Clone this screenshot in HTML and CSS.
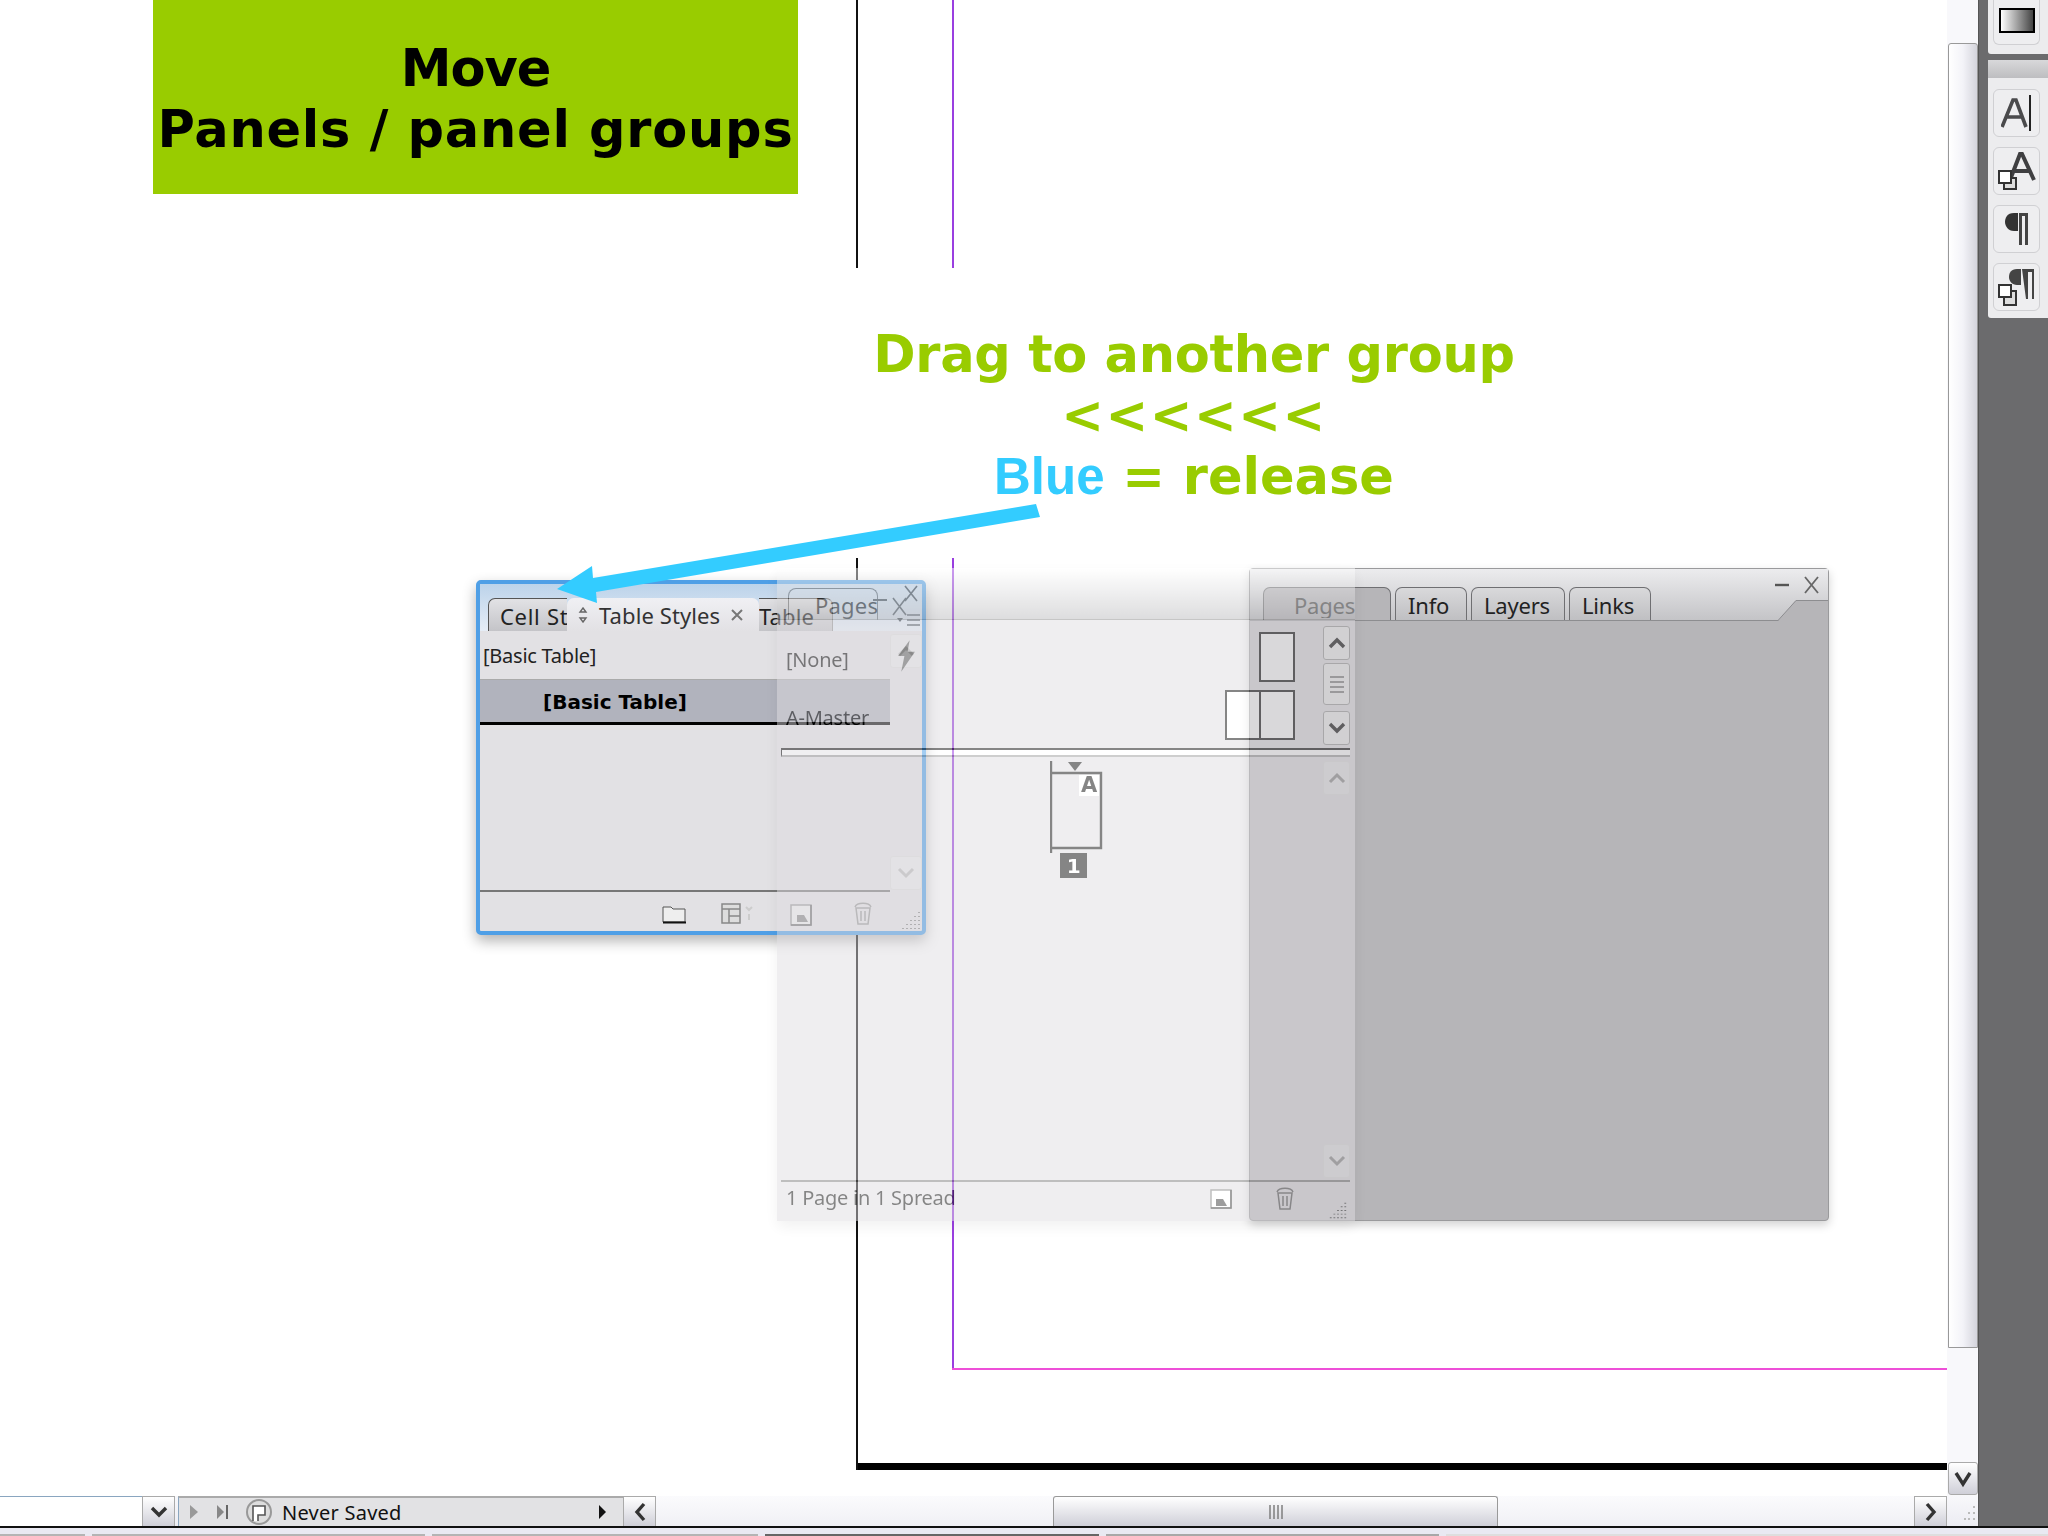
FILE: index.html
```html
<!DOCTYPE html>
<html lang="en">
<head>
<meta charset="utf-8">
<title>Move panels</title>
<link rel="stylesheet" href="styles.css">
</head>
<body>
<div class="app">
  <div class="workspace">
    <div class="document">
      <div class="doc-row">
        <main class="canvas">
          <h1 class="title"><span class="ln-move">Move</span><br><span class="ln-panels">Panels / panel groups</span></h1>
          <p class="callout"><span class="ln-drag">Drag to another group</span><br><span class="ln-arrows">&lt;&lt;&lt;&lt;&lt;&lt;</span><br><span class="blue">Blue</span> = release</p>

          <i class="guide black-a"></i><i class="guide black-b"></i><i class="guide purple-a"></i><i class="guide purple-b"></i><i class="guide pink"></i><i class="guide black-h"></i>

          <section class="panel-grey">
            <div class="grey-head">
              <div class="grey-tab active"><span>Pages</span></div>
              <div class="grey-tab info">Info</div>
              <div class="grey-tab layers">Layers</div>
              <div class="grey-tab links">Links</div>
              <div class="win-btns"><svg width="50" height="22" viewBox="0 0 50 22"><path d="M2 11h14" stroke="#555" stroke-width="2.400"/><path d="M32 3l13 16M45 3L32 19" stroke="#666" stroke-width="1.800" fill="none"/></svg></div>
            </div>
            <svg class="notch" width="50" height="21" viewBox="0 0 50 21"><path d="M0 21L18 0h32v21z" fill="#b6b5b8"/><path d="M0 20.500L18 .5h32" stroke="#8d8d90" fill="none"/></svg>
          </section>

          <section class="panel-blue">
            <div class="blue-head">
              <div class="tab side first"><span>Cell Styles</span></div>
              <div class="tab current">
                <svg width="14" height="16" viewBox="0 0 14 16"><path d="M7 1l3 4H4zM7 15l3-4H4z" fill="none" stroke="#666" stroke-width="1.400"/></svg>
                <span>Table Styles</span>
                <svg class="tab-x" width="14" height="14" viewBox="0 0 14 14"><path d="M2 2l10 10M12 2L2 12" stroke="#777" stroke-width="2"/></svg>
              </div>
              <div class="tab side last"><span>Table</span></div>
            </div>
            <div class="blue-body">
              <div class="blue-list">
                <div class="style-row">[Basic Table]</div>
                <div class="style-row selected">[Basic Table]</div>
                <div class="style-fill"></div>
              </div>
              <div class="blue-scroll">
                <div class="sb-btn"><svg width="20" height="14" viewBox="0 0 20 14"><path d="M3 11l7-7 7 7" fill="none" stroke="#bbb" stroke-width="3"/></svg></div>
                <div class="sb-btn"><svg width="20" height="14" viewBox="0 0 20 14"><path d="M3 3l7 7 7-7" fill="none" stroke="#bbb" stroke-width="3"/></svg></div>
              </div>
            </div>
            <div class="blue-foot">
              <svg class="ic-folder" width="24" height="20" viewBox="0 0 24 20"><path d="M1 18V3h8l2 2h12v13z" fill="#eee" stroke="#555"/><path d="M1 18.500h23" stroke="#111" stroke-width="2"/></svg>
              <svg class="ic-table" width="36" height="22" viewBox="0 0 36 22"><path d="M1 2h18v19H1zM1 7h18M8 7v14M8 14h11" fill="#ddd" stroke="#888" stroke-width="1.500"/><path d="M25 5l3 3 3-3M28 12v6" stroke="#ccc" stroke-width="2" fill="none"/></svg>
              <svg class="ic-new" width="22" height="22" viewBox="0 0 22 22"><path d="M1 1h20v20H1z" fill="#eee" stroke="#999" stroke-width="1.500"/><path d="M21 1v20H1" fill="none" stroke="#666" stroke-width="1.500"/><path d="M7 11h7l4 7H7z" fill="#888"/></svg>
              <svg class="ic-trash" width="20" height="24" viewBox="0 0 20 24"><path d="M3 7h14l-2 16H5zM2 6c2-5 14-5 16 0M8 10v10M12 10v10" fill="none" stroke="#999" stroke-width="1.500"/></svg>
              <svg class="grip" width="22" height="22" viewBox="0 0 22 22"><path d="M19 3v1M15 7v1M19 7v1M11 11v1M15 11v1M19 11v1M7 15v1M11 15v1M15 15v1M19 15v1M3 19v1M7 19v1M11 19v1M15 19v1M19 19v1" stroke="#888" stroke-width="2"/></svg>
            </div>
          </section>

          <section class="ghost">
            <div class="ghost-head">
              <div class="ghost-tab">
                <svg width="12" height="16" viewBox="0 0 12 16"><path d="M6 1l3 4H3zM6 15l3-4H3z" fill="none" stroke="#555" stroke-width="1.400"/></svg>
                <span>Pages</span>
              </div>
              <svg class="ghost-btns" width="52" height="48" viewBox="0 0 52 48"><path d="M2 22h14" stroke="#333" stroke-width="2"/><path d="M22 20l13 17M35 20L22 37M34 8l12 15M46 8L34 23" stroke="#333" stroke-width="1.600" fill="none"/><path d="M26 40h6l-3 4z" fill="#222"/><path d="M36 37h13M36 42h13M36 47h13" stroke="#333" stroke-width="1.500"/></svg>
            </div>
            <div class="ghost-opts">
              <span>[None]</span>
              <svg class="bolt" width="21" height="34" viewBox="0 0 20 32"><path d="M13 1L2 16h6L5 31l13-19h-7z" fill="#555"/></svg>
            </div>
            <div class="ghost-masters">
              <div class="master-name">A-Master</div>
              <div class="master-thumbs">
                <div class="thumb"></div>
                <div class="thumb-pair"><div class="thumb half"></div><div class="thumb half joined"></div></div>
              </div>
              <div class="master-scroll">
                <div class="sb-small"><svg width="20" height="14" viewBox="0 0 20 14"><path d="M3 11l7-7 7 7" fill="none" stroke="#000" stroke-width="3.400"/></svg></div>
                <div class="sb-small thumb-grip"><svg width="18" height="18" viewBox="0 0 18 18"><path d="M2 2h14M2 7h14M2 12h14M2 17h14" stroke="#555" stroke-width="1.500"/></svg></div>
                <div class="sb-small last-btn"><svg width="20" height="14" viewBox="0 0 20 14"><path d="M3 3l7 7 7-7" fill="none" stroke="#000" stroke-width="3.400"/></svg></div>
              </div>
            </div>
            <div class="ghost-divider"></div>
            <div class="ghost-pages">
              <div class="spread">
                <svg width="56" height="118" viewBox="0 0 56 118">
                  <path d="M1 0v92" stroke="#000" stroke-width="2.400"/>
                  <path d="M18 1h14l-7 9z" fill="#000"/>
                  <path d="M1 12h50v75H1z" fill="#dddce0" stroke="#000" stroke-width="2.400"/>
                  <path d="M29 14h20v21H29z" fill="#fff"/>
                  <text x="39" y="31" class="thumb-letter">A</text>
                  <path d="M10 92h27v25H10z" fill="#000"/>
                  <text x="23.500" y="112" class="thumb-num">1</text>
                </svg>
              </div>
              <div class="pages-scroll">
                <div class="sb-small faint"><svg width="20" height="14" viewBox="0 0 20 14"><path d="M3 11l7-7 7 7" fill="none" stroke="#888" stroke-width="3"/></svg></div>
                <div class="sb-small faint"><svg width="20" height="14" viewBox="0 0 20 14"><path d="M3 3l7 7 7-7" fill="none" stroke="#888" stroke-width="3"/></svg></div>
              </div>
            </div>
            <div class="ghost-foot">
              <span class="spread-count">1 Page in 1 Spread</span>
              <svg class="foot-new" width="22" height="20" viewBox="0 0 22 20"><path d="M1 1h20v18H1z" fill="#fff" stroke="#777" stroke-width="1.500"/><path d="M21 1v18H1" fill="none" stroke="#222" stroke-width="1.500"/><path d="M6 10h7l4 7H6z" fill="#333"/></svg>
              <svg class="foot-trash" width="20" height="24" viewBox="0 0 20 24"><path d="M3 7h14l-2 16H5zM2 6c2-5 14-5 16 0M8 10v10M12 10v10" fill="none" stroke="#555" stroke-width="1.500"/></svg>
              <svg class="foot-grip" width="20" height="20" viewBox="0 0 22 22"><path d="M19 3v1M15 7v1M19 7v1M11 11v1M15 11v1M19 11v1M7 15v1M11 15v1M15 15v1M19 15v1M3 19v1M7 19v1M11 19v1M15 19v1M19 19v1" stroke="#333" stroke-width="2"/></svg>
            </div>
          </section>

          <svg class="arrow" width="490" height="110" viewBox="556 500 490 110"><path d="M1036 504L593 578 592 566 557 589 597 603 596 592 1040 517z" fill="#33ccff"/></svg>
        </main>
        <div class="vscroll">
          <div class="vs-top"></div>
          <div class="vs-thumb"></div>
          <div class="vs-track"></div>
          <div class="vs-down"><svg width="20" height="18" viewBox="0 0 20 18"><path d="M3 3l7 11 7-11" fill="none" stroke="#333" stroke-width="3.400"/></svg></div>
        </div>
      </div>
      <div class="statusbar">
        <div class="page-field"></div>
        <div class="st-btn"><svg width="20" height="14" viewBox="0 0 20 14"><path d="M3 3l7 7 7-7" fill="none" stroke="#333" stroke-width="3.400"/></svg></div>
        <div class="st-info">
          <svg class="st-play" width="10" height="16" viewBox="0 0 10 16"><path d="M1 1l8 7-8 7z" fill="#999"/></svg>
          <svg class="st-last" width="14" height="16" viewBox="0 0 14 16"><path d="M1 1l7 7-7 7z" fill="#888"/><path d="M11 1v14" stroke="#666" stroke-width="2"/></svg>
          <svg class="st-doc" width="26" height="28" viewBox="0 0 26 28"><circle cx="13" cy="14" r="12" fill="#ddd" stroke="#999" stroke-width="2"/><path d="M7 23V8h12v9h-7v6" fill="#fff" stroke="#555" stroke-width="1.600"/></svg>
          <span class="st-text">Never Saved</span>
          <svg class="st-more" width="9" height="16" viewBox="0 0 9 16"><path d="M1 1l7 7-7 7z" fill="#111"/></svg>
        </div>
        <div class="st-btn left"><svg width="14" height="20" viewBox="0 0 14 20"><path d="M11 2L4 10l7 8" fill="none" stroke="#333" stroke-width="3.400"/></svg></div>
        <div class="hscroll">
          <div class="hs-thumb"><svg width="16" height="14" viewBox="0 0 16 14"><path d="M2 0v14M6 0v14M10 0v14M14 0v14" stroke="#777" stroke-width="1.400"/></svg></div>
        </div>
        <div class="st-btn right"><svg width="14" height="20" viewBox="0 0 14 20"><path d="M3 2l7 8-7 8" fill="none" stroke="#333" stroke-width="3.400"/></svg></div>
        <div class="corner"><svg width="14" height="22" viewBox="0 0 14 22"><path d="M10 2v2M10 8v2M5 8v2M10 14v2M5 14v2M1 14v2" stroke="#bbb" stroke-width="2"/></svg></div>
      </div>
    </div>
    <aside class="gutter">
      <div class="tool-top">
        <div class="tool-btn gradient-btn"><div class="swatch"></div></div>
      </div>
      <div class="tool-panel">
        <div class="tool-head"></div>
        <div class="tool-list">
          <div class="tool-btn"><svg width="32" height="36" viewBox="0 0 32 36"><path d="M1 32L12 5h3l10 27M6 22h15" fill="none" stroke="#4a4a4c" stroke-width="3.600"/><path d="M29 0v36" stroke="#222" stroke-width="2"/></svg></div>
          <div class="tool-btn"><svg width="38" height="38" viewBox="0 0 38 38"><path d="M12 28L22 2h2l12 26M16 19h15" fill="none" stroke="#3f3f41" stroke-width="4"/><path d="M6 26h12v11H6z" fill="#ddd" stroke="#333" stroke-width="2"/><path d="M1 19h12v12H1z" fill="#fff" stroke="#333" stroke-width="2"/></svg></div>
          <div class="tool-btn"><svg width="26" height="34" viewBox="0 0 26 34"><path d="M14 1H10C3 1 1 6 1 10s3 9 9 9h4z" fill="#333"/><path d="M15 1h9v32h-3V4h-3v29h-3z" fill="#444"/></svg></div>
          <div class="tool-btn"><svg width="38" height="40" viewBox="0 0 38 40"><path d="M23 2h-4c-6 0-8 4-8 8s3 8 8 8h4z" fill="#444"/><path d="M24 2h12v30h-2V5h-4v27h-2z" fill="#444"/><path d="M6 24h12v14H6z" fill="#ddd" stroke="#333" stroke-width="2"/><path d="M1 18h12v12H1z" fill="#fff" stroke="#333" stroke-width="2"/></svg></div>
        </div>
      </div>
    </aside>
  </div>
  <div class="strip">
    <i class="st-tab a"></i><i class="st-tab b"></i><i class="st-tab c"></i><i class="st-tab d"></i><i class="st-tab e"></i><i class="st-tab f"></i>
  </div>
</div>
</body>
</html>
```
FILE: styles.css
```css
* { box-sizing: border-box; }
html, body { margin: 0; padding: 0; background: #fff; }
body { font-family: "Noto Sans", "DejaVu Sans", sans-serif; overflow: hidden; }
.app { width: 2048px; height: 1536px; display: flex; flex-direction: column; }
.workspace { flex: 1; display: flex; min-height: 0; }
.document { flex: 1; display: flex; flex-direction: column; min-width: 0; }
.doc-row { flex: 1; display: flex; min-height: 0; }

/* canvas */
.canvas { position: relative; flex: 1; overflow: hidden; background: #fff; }
.title {
  width: 645px; height: 194px; margin: 0 0 0 153px; padding-top: 38px;
  background: #99cc00; color: #000; text-align: center; white-space: nowrap;
  font: bold 51px/61px "DejaVu Sans", sans-serif;
}
.ln-move { letter-spacing: -1px; }
.ln-panels { letter-spacing: .75px; }
.callout {
  width: 700px; margin: 130px 0 0 844px; color: #99cc00; text-align: center; white-space: nowrap;
  font: bold 51px/61px "DejaVu Sans", sans-serif;
}
.ln-drag { letter-spacing: -.25px; }
.ln-arrows { letter-spacing: 1.5px; }
.blue { color: #33ccff; font-family: "Liberation Sans", sans-serif; }
.guide { position: absolute; display: block; }
.black-a { left: 856px; top: 0; width: 2px; height: 268px; background: #111; }
.black-b { left: 856px; top: 558px; width: 2px; height: 912px; background: #111; }
.purple-a { left: 952px; top: 0; width: 2px; height: 268px; background: #9a3fe0; }
.purple-b { left: 952px; top: 558px; width: 2px; height: 812px; background: #9a3fe0; }
.pink { left: 952px; top: 1368px; right: 0; height: 2px; background: #ee4fd8; }
.black-h { left: 858px; top: 1463px; right: 0; height: 7px; background: #000; }

/* grey docked panel */
.panel-grey {
  position: absolute; left: 1249px; top: 568px; width: 580px; height: 653px;
  background: #b6b5b8; border-radius: 4px; border: 1px solid #9a9a9c;
  box-shadow: 0 4px 10px rgba(0,0,0,.18);
  font-size: 22px; letter-spacing: -.2px; color: #222;
}
.grey-head {
  position: relative; height: 52px; padding: 18px 0 0 13px; display: flex; align-items: stretch; gap: 4px;
  background: linear-gradient(#ececee, #c4c4c7); border-bottom: 1px solid #8d8d90;
}
.grey-tab {
  height: 33px; padding: 4px 0 0 12px; line-height: 26px; border: 1px solid #6f6f72; border-bottom: 0;
  border-radius: 7px 7px 0 0; background: linear-gradient(#d9d9db, #bfbfc2);
}
.grey-tab.active { width: 128px; padding-left: 30px; background: #b6b5b8; }
.grey-tab.info { width: 72px; }
.grey-tab.layers { width: 94px; }
.grey-tab.links { width: 82px; }
.grey-tab.active span { display: block; width: 62px; overflow: hidden; color: #444; }
.win-btns { position: absolute; right: 5px; top: 3px; }
.notch { position: absolute; right: 0; top: 31px; }

/* blue target panel */
.panel-blue {
  position: absolute; left: 476px; top: 580px; width: 450px; height: 355px;
  display: flex; flex-direction: column; background: #e2e1e4;
  border: 4px solid #4f9fe6; border-radius: 5px;
  box-shadow: 0 6px 14px rgba(0,0,0,.3);
  font-size: 20px; letter-spacing: -.25px; color: #222;
}
.blue-head {
  height: 47px; padding: 14px 0 0 8px; display: flex; flex: none;
  background: linear-gradient(#bcd3ea, #e6edf6);
}
.tab { height: 33px; white-space: nowrap; overflow: hidden; line-height: 34px; font-size: 22px; letter-spacing: .1px; }
.tab.side { background: linear-gradient(#e2e2e5, #c4c4c8); border-top: 1px solid #555; }
.tab.first { width: 79px; padding-left: 11px; border-left: 1px solid #555; border-radius: 7px 0 0 0; letter-spacing: .7px; }
.tab.last { width: 74px; border-right: 1px solid #999; border-radius: 0 7px 0 0; }
.tab.current {
  width: 192px; padding-left: 9px; display: flex; align-items: center; gap: 9px; flex: none;
  background: linear-gradient(#f0f0f4, #e2e1e4); border-radius: 7px 7px 0 0; color: #333;
}
.tab-x { margin-left: 1px; }
.blue-body { flex: 1; display: flex; min-height: 0; }
.blue-list { flex: 1; display: flex; flex-direction: column; border-bottom: 2px solid #777; }
.style-row { height: 49px; padding: 11px 0 0 3px; line-height: 28px; border-bottom: 1px solid #aaa; }
.style-row.selected {
  height: 45px; padding: 8px 0 0 63px; background: #b1b3bd; border-bottom: 3px solid #000;
  font: bold 20px/28px "DejaVu Sans", sans-serif; letter-spacing: 0; color: #000;
}
.style-fill { flex: 1; }
.blue-scroll { width: 32px; display: flex; flex-direction: column; justify-content: space-between; padding: 3px 0 2px; }
.sb-btn { height: 34px; display: flex; align-items: center; justify-content: center; border: 1px solid #ddd; border-radius: 3px; background: #e8e8ea; }
.blue-foot { position: relative; height: 39px; flex: none; }
.blue-foot svg { position: absolute; }
.ic-folder { left: 182px; top: 12px; }
.ic-table { left: 241px; top: 10px; }
.ic-new { left: 310px; top: 12px; }
.ic-trash { left: 373px; top: 9px; }
.grip { right: 0; bottom: 0; }

/* translucent dragged panel */
.ghost {
  position: absolute; left: 777px; top: 568px; width: 578px; height: 653px;
  display: flex; flex-direction: column; opacity: .48; background: #dddce0;
  font-size: 20px; letter-spacing: -.25px; color: #000;
  box-shadow: 0 6px 14px rgba(0,0,0,.12);
}
.ghost-head {
  position: relative; flex: none; height: 52px; padding: 20px 0 0 11px;
  background: linear-gradient(#fff, #b8b8bb); border-bottom: 1px solid #888;
}
.ghost-tab {
  width: 90px; height: 32px; padding-left: 15px; display: flex; align-items: center; gap: 11px;
  border: 1px solid #555; border-bottom: 0; border-radius: 8px 8px 0 0; white-space: nowrap; overflow: visible;
}
.ghost-tab span { color: #000; font-size: 22px; letter-spacing: .2px; }
.ghost-btns { position: absolute; left: 94px; top: 10px; }
.ghost-opts { flex: none; height: 60px; display: flex; align-items: center; justify-content: flex-start; padding: 18px 0 0 9px; position: relative; }
.bolt { position: absolute; left: 119px; top: 19px; }
.ghost-masters { flex: none; height: 68px; display: flex; position: relative; padding-left: 9px; }
.master-name { padding-top: 24px; line-height: 28px; color: #000; }
.master-thumbs { position: absolute; left: 448px; top: -48px; display: flex; flex-direction: column; gap: 8px; align-items: flex-end; width: 70px; }
.thumb { width: 36px; height: 50px; background: #fff; border: 2px solid #000; }
.thumb-pair { display: flex; }
.thumb.half { width: 36px; }
.thumb.joined { margin-left: -2px; }
.master-scroll { position: absolute; left: 546px; top: -54px; width: 27px; display: flex; flex-direction: column; gap: 3px; }
.sb-small { height: 34px; display: flex; align-items: center; justify-content: center; border: 1px solid #999; border-radius: 3px; background: #eee; }
.sb-small svg { display: block; }
.thumb-grip { height: 42px; }
.last-btn { margin-top: 3px; }
.ghost-divider { flex: none; height: 9px; margin: 0 5px 0 4px; border-top: 2px solid #000; border-left: 1px solid #000; border-bottom: 2px solid #999; background: #fff; }
.ghost-pages { flex: 1; display: flex; justify-content: space-between; padding: 4px 5px 0 0; min-height: 0; }
.spread { margin-left: 273px; }
.pages-scroll { width: 27px; display: flex; flex-direction: column; justify-content: space-between; padding-bottom: 2px; }
.sb-small.faint { border-color: #ddd; background: #e6e6e8; }
.ghost-foot { flex: none; height: 41px; position: relative; margin: 0 5px 0 4px; border-top: 2px solid #777; }
.spread-count { position: absolute; left: 5px; top: 1px; line-height: 30px; white-space: nowrap; }
.foot-new { position: absolute; left: 429px; top: 7px; }
.foot-trash { position: absolute; left: 494px; top: 4px; }
.foot-grip { position: absolute; right: 2px; bottom: 1px; }
.thumb-letter { font: bold 21px "DejaVu Sans", sans-serif; text-anchor: middle; fill: #000; }
.thumb-num { font: bold 20px "DejaVu Sans", sans-serif; text-anchor: middle; fill: #fff; }
.arrow { position: absolute; left: 556px; top: 500px; }

/* vertical scrollbar */
.vscroll { width: 31px; flex: none; display: flex; flex-direction: column; background: #f8f8fb; }
.vs-top { height: 43px; flex: none; }
.vs-thumb { height: 1305px; flex: none; margin-left: 1px; border: 1px solid #999; border-radius: 3px 3px 0 0; background: linear-gradient(90deg, #fff, #f3f3f8 50%, #d4d4dc); }
.vs-track { flex: 1; }
.vs-down { height: 33px; flex: none; margin: 0 0 1px 1px; display: flex; align-items: center; justify-content: center; border: 1px solid #aaa; border-radius: 3px; background: linear-gradient(#fff, #cfcfd8); }

/* status bar */
.statusbar { height: 30px; flex: none; display: flex; background: linear-gradient(#f8f8fb, #ececf2); }
.page-field { width: 142px; flex: none; background: #fff; border-top: 1px solid #8aa6c0; }
.st-btn { width: 33px; flex: none; display: flex; align-items: center; justify-content: center; background: linear-gradient(#fff, #cfcfd8); border: 1px solid #aaa; border-bottom: 0; }
.st-info { width: 445px; flex: none; margin-left: 3px; display: flex; align-items: center; background: #e2e2e4; border-top: 2px solid #aaa; border-left: 1px solid #8aa6c0; font-size: 20px; letter-spacing: .25px; color: #111; }
.st-play { margin-left: 10px; }
.st-last { margin-left: 17px; }
.st-doc { margin-left: 16px; }
.st-text { margin-left: 10px; white-space: nowrap; flex: 1; }
.st-more { margin-right: 16px; }
.hscroll { flex: 1; padding-left: 397px; background: linear-gradient(#fbfbfd, #f0f0f5); }
.hs-thumb { width: 445px; height: 30px; display: flex; align-items: center; justify-content: center; border: 1px solid #999; border-bottom: 0; border-radius: 3px 3px 0 0; background: linear-gradient(#fff, #cfcfd8); }
.corner { width: 31px; flex: none; display: flex; align-items: flex-end; justify-content: flex-end; }

/* tool column */
.gutter { width: 70px; flex: none; padding-left: 9px; background: #6b6b6d; border-left: 1px solid #555; }
.tool-top { height: 54px; padding: 0 0 0 5px; background: #ececee; border-radius: 0 0 0 3px; }
.tool-btn { width: 47px; height: 48px; display: flex; align-items: center; justify-content: center; border: 1px solid #d0d0d3; border-radius: 6px; background: #eeeef0; }
.gradient-btn { height: 45px; border-radius: 0 0 6px 6px; border-top: 0; }
.swatch { width: 36px; height: 25px; border: 2px solid #000; margin-bottom: 4px; background: linear-gradient(90deg, #fff, #444); }
.tool-panel { margin-top: 6px; height: 258px; background: #ececee; border-radius: 3px 0 0 3px; }
.tool-head { height: 18px; background: linear-gradient(#d8d8da, #bdbdc0); }
.tool-list { display: flex; flex-direction: column; gap: 10px; padding: 11px 0 0 5px; }

/* bottom strip */
.strip { height: 10px; flex: none; display: flex; align-items: flex-end; gap: 7px; border-top: 2px solid #111; background: #e9e9f2; }
.st-tab { display: block; height: 2px; }
.st-tab.a { width: 85px; background: #b4b4b4; }
.st-tab.b { width: 333px; background: #b4b4b4; }
.st-tab.c { width: 326px; background: #b4b4b4; }
.st-tab.d { width: 334px; background: #666; }
.st-tab.e { width: 333px; background: #a8a8a8; }
.st-tab.f { flex: 1; background: #dedede; }
```
